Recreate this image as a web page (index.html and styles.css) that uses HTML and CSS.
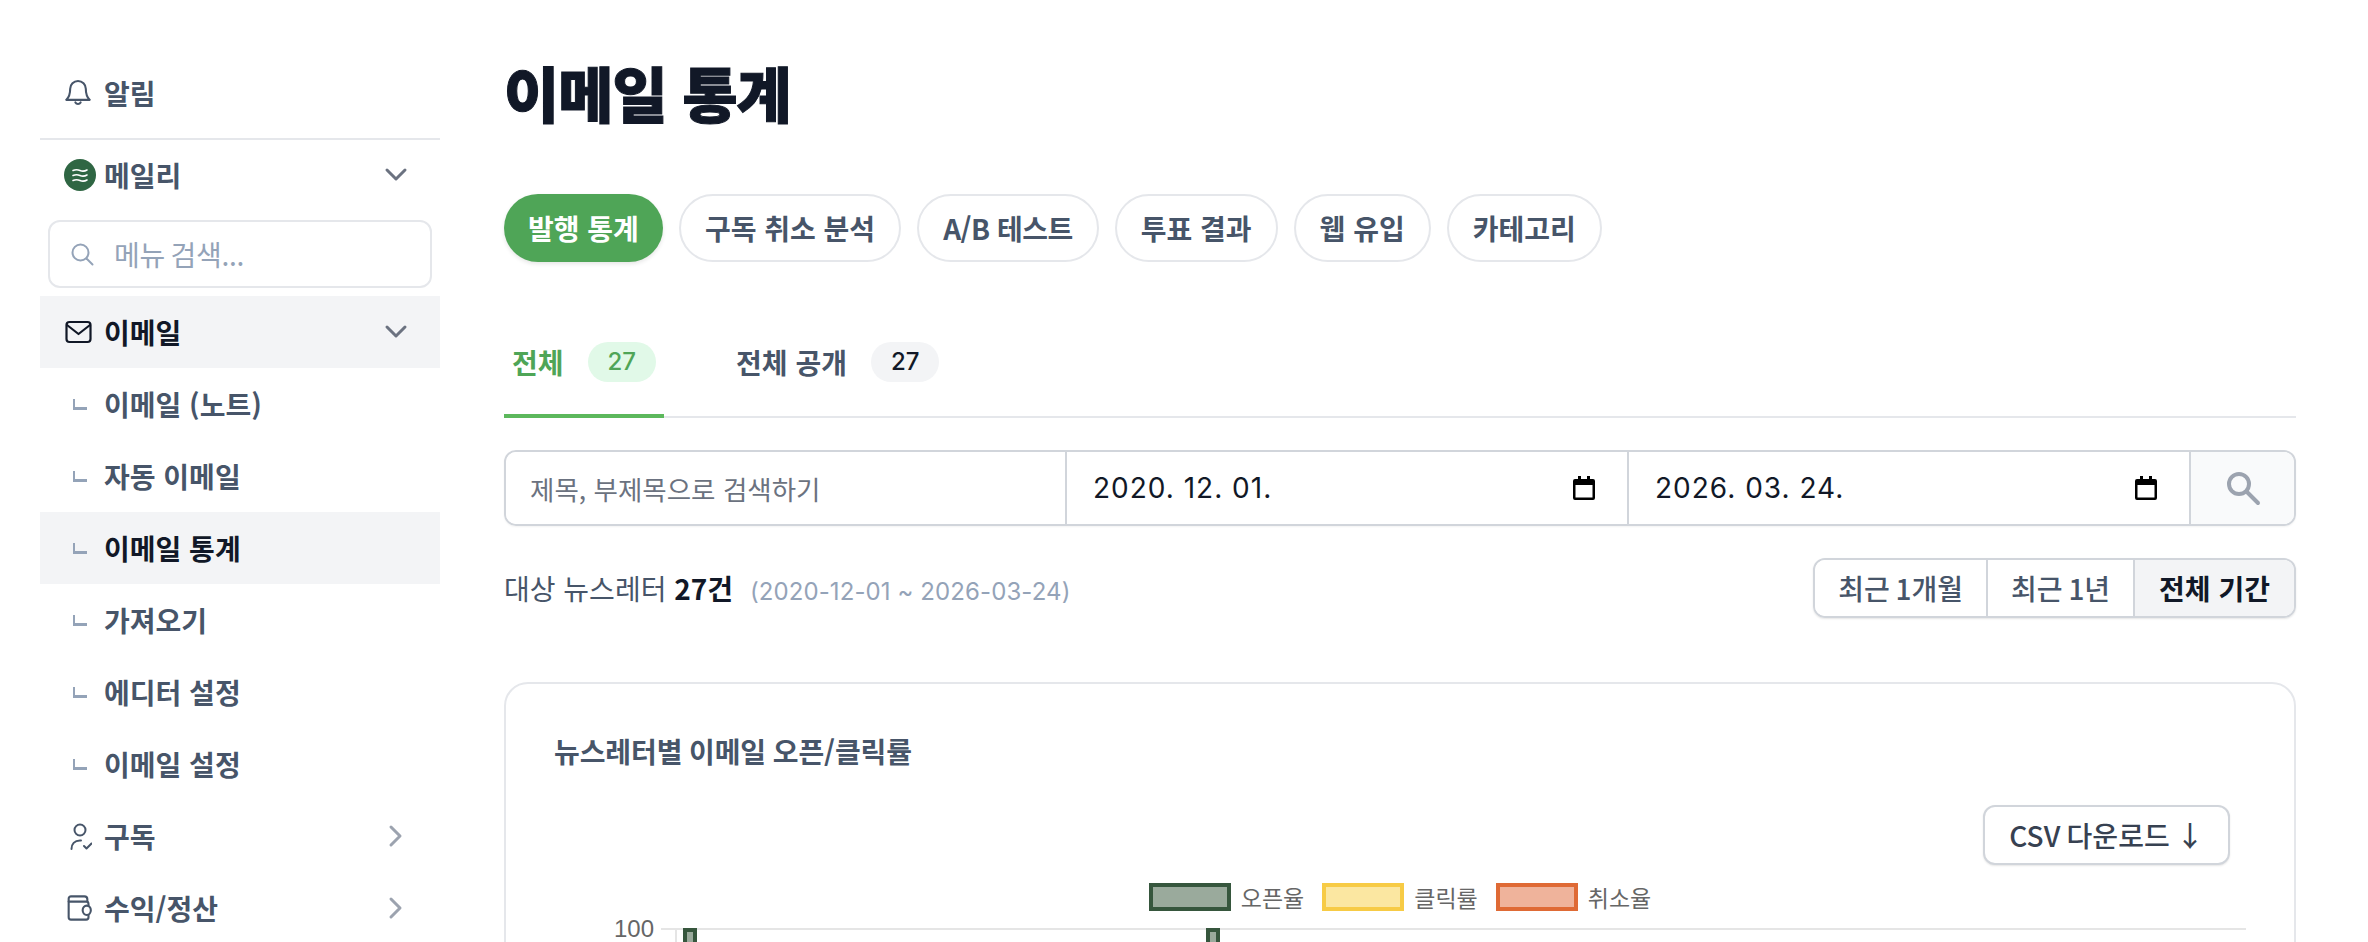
FILE: index.html
```html
<!DOCTYPE html>
<html lang="ko">
<head>
    <meta charset="UTF-8">
    <title>이메일 통계</title>
    <link rel="stylesheet" href="styles.css">
</head>
<body>
    <div class="layout">
        <nav class="sidebar">
            <div class="side-top">
                <a class="menu-item">
                    <svg class="menu-icon" viewBox="2.500 1.500 19 21.500" fill="none" stroke="#475569" stroke-width="1.600" stroke-linecap="round" stroke-linejoin="round"><path d="M6 9a6 6 0 0 1 12 0c0 6 2.500 8 3 8.500H3C3.500 17 6 15 6 9z"/><path d="M10 19.500a2.300 2.300 0 0 0 4 0"/></svg>
                    <span>알림</span>
                </a>
            </div>
            <a class="menu-item brand">
                <svg class="brand-logo" viewBox="0 0 32 32"><circle cx="16" cy="16" r="16" fill="#2f6643"/><path d="M9 11.500q3.500-1.500 7 0t7-.5M9 16.500q3.500-1.500 7 0t7-.5M9 21.500q3.500-1.500 7 0t7-.5" fill="none" stroke="#fff" stroke-width="1.600" stroke-linecap="round"/></svg>
                <span>메일리</span>
                <svg class="chev" viewBox="0 0 24 24"><path d="M3 7l9 9 9-9"/></svg>
            </a>
            <label class="menu-search">
                <svg viewBox="0 0 24 24" fill="none" stroke="#94a3b8" stroke-width="2" stroke-linecap="round"><circle cx="10.500" cy="10.500" r="8"/><path d="M16.500 16.500l6 6"/></svg>
                <input type="text" placeholder="메뉴 검색...">
            </label>
            <a class="menu-item open">
                <svg class="menu-icon" viewBox="-1 0 28 24" fill="none" stroke="#111827" stroke-width="2.200" stroke-linecap="round" stroke-linejoin="round"><rect x="1.500" y="2" width="24" height="20" rx="3"/><path d="M2 5l11.500 9 11.500-9"/></svg>
                <span>이메일</span>
                <svg class="chev" viewBox="0 0 24 24"><path d="M3 7l9 9 9-9"/></svg>
            </a>
            <a class="menu-item sub"><i class="branch"></i><span>이메일 (노트)</span></a>
            <a class="menu-item sub"><i class="branch"></i><span>자동 이메일</span></a>
            <a class="menu-item sub open"><i class="branch"></i><span>이메일 통계</span></a>
            <a class="menu-item sub"><i class="branch"></i><span>가져오기</span></a>
            <a class="menu-item sub"><i class="branch"></i><span>에디터 설정</span></a>
            <a class="menu-item sub"><i class="branch"></i><span>이메일 설정</span></a>
            <a class="menu-item">
                <svg class="menu-icon" viewBox="0 0 28 28" fill="none" stroke="#475569" stroke-width="2" stroke-linecap="round" stroke-linejoin="round"><circle cx="16" cy="8" r="5.500"/><path d="M7.500 27c0-5 3-8.500 8.500-8.500h1"/><path d="M20 24l2.500 2.500 5-5"/></svg>
                <span>구독</span>
                <svg class="chev side" viewBox="0 0 24 24"><path d="M7 3l9 9-9 9"/></svg>
            </a>
            <a class="menu-item">
                <svg class="menu-icon" viewBox="-2 0 24 24" fill="none" stroke="#475569" stroke-width="1.800" stroke-linecap="round" stroke-linejoin="round"><path d="M18 6V4.500A2.500 2.500 0 0 0 15.500 2H4a2 2 0 0 0-2 2v16a2 2 0 0 0 2 2h13a2 2 0 0 0 2-2v-2"/><path d="M2 6.500h15a2 2 0 0 1 2 2V10"/><rect x="14" y="10" width="7" height="8" rx="4"/></svg>
                <span>수익/정산</span>
                <svg class="chev side" viewBox="0 0 24 24"><path d="M7 3l9 9-9 9"/></svg>
            </a>
        </nav>

        <main class="content">
            <h1>이메일 통계</h1>

            <div class="pills">
                <button class="pill active">발행 통계</button>
                <button class="pill">구독 취소 분석</button>
                <button class="pill tight">A/B 테스트</button>
                <button class="pill">투표 결과</button>
                <button class="pill">웹 유입</button>
                <button class="pill">카테고리</button>
            </div>

            <div class="tabs">
                <a class="tab active">전체 <span class="count">27</span></a>
                <a class="tab">전체 공개 <span class="count">27</span></a>
            </div>

            <div class="filter">
                <input class="filter-text" type="text" placeholder="제목, 부제목으로 검색하기">
                <div class="filter-date">
                    <span>2020. 12. 01.</span>
                    <svg viewBox="0 0 22 24"><path d="M5 0h3v3h6V0h3v3h3a2 2 0 0 1 2 2v17a2 2 0 0 1-2 2H2a2 2 0 0 1-2-2V5a2 2 0 0 1 2-2h3zM2.500 9v12.500h17V9z"/></svg>
                </div>
                <div class="filter-date">
                    <span>2026. 03. 24.</span>
                    <svg viewBox="0 0 22 24"><path d="M5 0h3v3h6V0h3v3h3a2 2 0 0 1 2 2v17a2 2 0 0 1-2 2H2a2 2 0 0 1-2-2V5a2 2 0 0 1 2-2h3zM2.500 9v12.500h17V9z"/></svg>
                </div>
                <button class="filter-btn">
                    <svg viewBox="0 0 36 36" fill="none" stroke="#9ca3af" stroke-width="4" stroke-linecap="round"><circle cx="14" cy="14" r="10"/><path d="M22 22l11 11"/></svg>
                </button>
            </div>

            <div class="summary">
                <p>대상 뉴스레터 <b>27건</b> <small>(2020-12-01 ~ 2026-03-24)</small></p>
                <div class="segment">
                    <button>최근 1개월</button>
                    <button>최근 1년</button>
                    <button class="on">전체 기간</button>
                </div>
            </div>

            <section class="card">
                <h3>뉴스레터별 이메일 오픈/클릭률</h3>
                <div class="card-tools"><button class="csv">CSV 다운로드 ↓</button></div>
                <div class="legend">
                    <span><i class="swatch open-rate"></i>오픈율</span>
                    <span><i class="swatch click-rate"></i>클릭률</span>
                    <span><i class="swatch cancel-rate"></i>취소율</span>
                </div>
                <svg class="plot" viewBox="0 0 1692 60" width="1692" height="60">
                    <text x="100" y="18" text-anchor="end" class="tick">100</text>
                    <path d="M107 10H1692" stroke="#e5e5e5" stroke-width="2"/>
                    <path d="M122 10V60" stroke="#e5e5e5" stroke-width="2"/>
                    <rect x="131" y="11" width="10" height="60" fill="#9aaa9c" stroke="#36563d" stroke-width="4"/>
                    <rect x="654" y="11" width="10" height="60" fill="#9aaa9c" stroke="#36563d" stroke-width="4"/>
                </svg>
            </section>
        </main>
    </div>
</body>
</html>
```

FILE: styles.css
```css
* {
    box-sizing: border-box;
}
html, body {
    margin: 0;
    height: 942px;
    overflow: hidden;
}
body {
    font-family: "Noto Sans CJK KR", "Noto Sans", Inter, sans-serif;
    background: white;
    color: #111827;
}
button, input {
    font-family: inherit;
}
.layout {
    display: flex;
    padding: 0 72px 0 40px;
    gap: 64px;
}

/* sidebar */
.sidebar {
    width: 400px;
    flex: none;
    padding-top: 57px;
}
.side-top {
    border-bottom: 2px solid #e5e7eb;
    padding-bottom: 9px;
}
.menu-item {
    display: flex;
    align-items: center;
    height: 72px;
    padding: 0 24px;
    gap: 12px;
    font-size: 28px;
    font-weight: 600;
    color: #475569;
}
.menu-item span {
    flex: 1;
}
.menu-icon {
    width: 28px;
    height: 28px;
    flex: none;
}
.brand {
    height: 70px;
}
.brand-logo {
    width: 32px;
    height: 32px;
    flex: none;
    margin-right: -4px;
}
.chev {
    width: 24px;
    height: 24px;
    flex: none;
    fill: none;
    stroke: #6b7280;
    stroke-width: 3;
    stroke-linecap: round;
    stroke-linejoin: round;
    margin-right: 8px;
}
.chev.side {
    stroke: #9ca3af;
}
.menu-search {
    display: flex;
    align-items: center;
    gap: 18px;
    height: 68px;
    margin: 10px 8px 8px;
    padding: 0 20px;
    border: 2px solid #e5e7eb;
    border-radius: 12px;
}
.menu-search svg {
    width: 24px;
    height: 24px;
    flex: none;
}
.menu-search input {
    border: none;
    outline: none;
    width: 100%;
    font-size: 28px;
    word-spacing: -2px;
    letter-spacing: -0.300px;
}
.menu-search input::placeholder {
    color: #94a3b8;
}
.open {
    background: #f3f4f6;
    color: #111827;
}
.branch {
    width: 14px;
    height: 11px;
    flex: none;
    margin: 0 5px 0 9px;
    border-left: 2px solid #94a3b8;
    border-bottom: 3px solid #94a3b8;
}

/* content */
.content {
    flex: 1;
    min-width: 0;
    padding-top: 48px;
}
h1 {
    margin: 0;
    font-size: 60px;
    line-height: 88px;
    font-weight: 900;
    letter-spacing: -1px;
    -webkit-text-stroke: 1px #111827;
    color: #111827;
}
.pills {
    display: flex;
    gap: 16px;
    margin-top: 58px;
}
.pill {
    height: 68px;
    padding: 0 24px;
    border: 2px solid #e5e7eb;
    border-radius: 34px;
    background: white;
    color: #475569;
    font-size: 28px;
    font-weight: 600;
}
.pill.tight {
    letter-spacing: -0.500px;
}
.pill.active {
    background: #4fa557;
    border: 0;
    color: white;
    box-shadow: 0 2px 4px rgba(0,0,0,0.1);
}
.tabs {
    display: flex;
    gap: 64px;
    margin-top: 68px;
    border-bottom: 2px solid #e5e7eb;
}
.tab {
    display: flex;
    align-items: flex-start;
    gap: 24px;
    height: 88px;
    margin-bottom: -2px;
    padding: 12px 8px 0;
    font-size: 28px;
    line-height: 40px;
    font-weight: 600;
    color: #475569;
    border-bottom: 4px solid transparent;
}
.tab.active {
    color: #4fa557;
    border-bottom-color: #5cb85c;
}
.count {
    padding: 0 20px;
    height: 40px;
    line-height: 40px;
    border-radius: 20px;
    font-size: 24px;
    font-weight: 500;
    font-family: Inter, sans-serif;
    background: #f3f4f6;
    color: #111827;
}
.tab.active .count {
    background: #e1f9e8;
    color: #4fa557;
}
.filter {
    display: flex;
    height: 76px;
    margin-top: 32px;
    border: 2px solid #d1d5db;
    border-radius: 12px;
    box-shadow: 0 1px 2px rgba(0,0,0,0.05);
    overflow: hidden;
}
.filter-text {
    width: 559px;
    flex: none;
    border: none;
    outline: none;
    padding: 0 24px;
    font-size: 26.5px;
}
.filter-text::placeholder {
    color: #6b7280;
}
.filter-date {
    width: 562px;
    flex: none;
    display: flex;
    align-items: center;
    justify-content: space-between;
    padding: 0 32px 0 26px;
    border-left: 2px solid #d1d5db;
    font-family: Inter, sans-serif;
    font-size: 28px;
    letter-spacing: 1px;
}
.filter-date svg {
    width: 22px;
    height: 24px;
}
.filter-btn {
    flex: 1;
    border: none;
    border-left: 2px solid #d1d5db;
    background: #f9fafb;
    display: flex;
    align-items: center;
    justify-content: center;
}
.filter-btn svg {
    width: 36px;
    height: 36px;
}
.summary {
    display: flex;
    align-items: center;
    justify-content: space-between;
    margin-top: 32px;
}
.summary p {
    margin: 0;
    font-size: 28px;
    color: #475569;
}
.summary b {
    color: #111827;
    font-weight: 700;
}
.summary small {
    margin-left: 9px;
    font-size: 24px;
    letter-spacing: 0.100px;
    color: #94a3b8;
    font-family: Inter, sans-serif;
}
.segment {
    display: flex;
    height: 60px;
    border: 2px solid #d1d5db;
    border-radius: 12px;
    overflow: hidden;
    box-shadow: 0 1px 2px rgba(0,0,0,0.1);
}
.segment button {
    border: none;
    border-left: 2px solid #d1d5db;
    background: white;
    padding: 0 23px;
    font-size: 28px;
    font-weight: 500;
    word-spacing: -2px;
    color: #475569;
}
.segment button:first-child {
    border-left: none;
}
.segment .on {
    padding: 0 24px;
    background: #f3f4f6;
    color: #111827;
    font-weight: 700;
    word-spacing: 0;
}
.card {
    margin-top: 64px;
    padding: 47px 48px;
    border: 2px solid #e5e7eb;
    border-radius: 24px;
    height: 400px;
}
.card h3 {
    margin: 0;
    font-size: 28px;
    line-height: 40px;
    font-weight: 600;
    word-spacing: -1px;
    letter-spacing: -0.100px;
    color: #475569;
}
.card-tools {
    display: flex;
    justify-content: flex-end;
    margin-top: 34px;
    padding-right: 16px;
}
.csv {
    height: 60px;
    padding: 0 24px;
    border: 2px solid #d1d5db;
    border-radius: 12px;
    background: white;
    color: #374151;
    font-size: 28px;
    font-weight: 500;
    word-spacing: -1.500px;
    box-shadow: 0 1px 2px rgba(0,0,0,0.1);
}
.legend {
    display: flex;
    justify-content: center;
    gap: 18px;
    margin-top: 18px;
    font-size: 23px;
    line-height: 28px;
    color: #666;
}
.legend span {
    display: flex;
    align-items: center;
    gap: 10px;
}
.swatch {
    width: 82px;
    height: 28px;
    border: 4px solid;
}
.open-rate {
    background: #9aaa9c;
    border-color: #36563d;
}
.click-rate {
    background: #fbe7a1;
    border-color: #f7cb45;
}
.cancel-rate {
    background: #efb39b;
    border-color: #df6a35;
}
.plot {
    display: block;
    margin-top: 8px;
    overflow: visible;
}
.tick {
    font-family: "Liberation Sans", Arial, sans-serif;
    font-size: 24px;
    fill: #666;
}
```
